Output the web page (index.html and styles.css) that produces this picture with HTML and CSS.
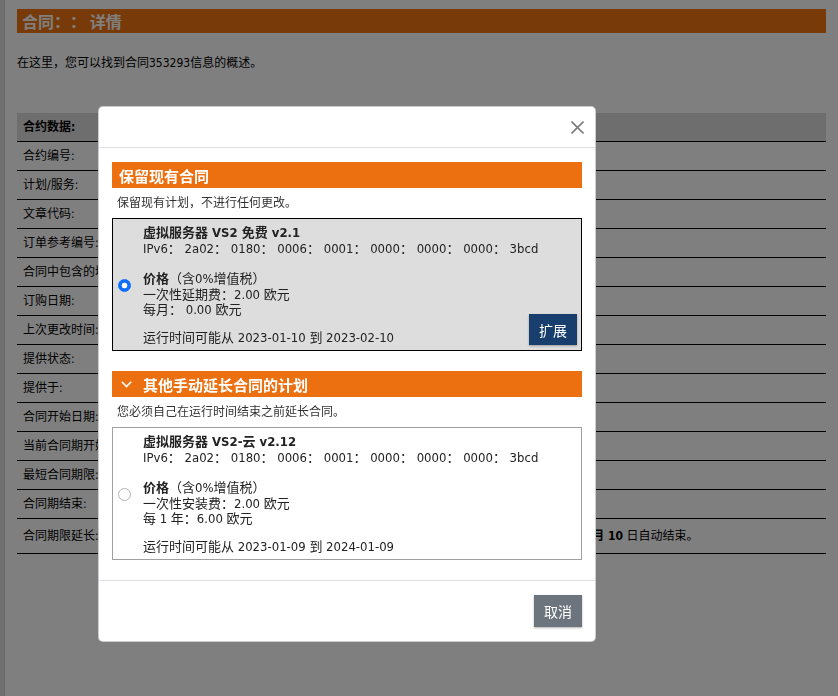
FILE: index.html
```html
<!DOCTYPE html>
<html lang="zh-CN">
<head>
<meta charset="utf-8">
<title>合同详情</title>
<link rel="stylesheet" href="styles.css">
</head>
<body>
<div class="page">
  <div class="edge"></div>
  <main class="content">
    <h1 class="page-title">合同：： 详情</h1>
    <p class="intro">在这里，您可以找到合同353293信息的概述。</p>
    <table class="data">
      <thead>
        <tr><th colspan="2">合约数据:</th></tr>
      </thead>
      <tbody>
        <tr><td class="lbl">合约编号:</td><td>353293</td></tr>
        <tr><td class="lbl">计划/服务:</td><td>虚拟服务器 VS2 免费 v2.1</td></tr>
        <tr><td class="lbl">文章代码:</td><td>VS2-FREE</td></tr>
        <tr><td class="lbl">订单参考编号:</td><td>-</td></tr>
        <tr><td class="lbl">合同中包含的域名:</td><td>-</td></tr>
        <tr><td class="lbl">订购日期:</td><td>2022-12-10</td></tr>
        <tr><td class="lbl">上次更改时间:</td><td>2022-12-10</td></tr>
        <tr><td class="lbl">提供状态:</td><td>已提供</td></tr>
        <tr><td class="lbl">提供于:</td><td>2022-12-10</td></tr>
        <tr><td class="lbl">合同开始日期:</td><td>2022-12-10</td></tr>
        <tr><td class="lbl">当前合同期开始:</td><td>2022-12-10</td></tr>
        <tr><td class="lbl">最短合同期限:</td><td>1 个月</td></tr>
        <tr><td class="lbl">合同期结束:</td><td>2023-02-10</td></tr>
        <tr class="last"><td class="lbl">合同期限延长:</td><td>合同期限不会自动延长，本合同将于 <b>2023 年 2 月 10</b> 日自动结束。</td></tr>
      </tbody>
    </table>
  </main>
</div>

<div class="backdrop"></div>

<div class="modal" role="dialog">
  <div class="modal-header">
    <button class="close" aria-label="关闭">
      <svg width="13" height="13" viewBox="0 0 13 13"><path d="M0.5 0.5 L12.5 12.5 M12.5 0.5 L0.5 12.5" stroke="#7d7d7d" stroke-width="1.6" fill="none"/></svg>
    </button>
  </div>
  <div class="modal-body">
    <section class="group">
      <h2 class="group-bar">保留现有合同</h2>
      <p class="group-desc">保留现有计划，不进行任何更改。</p>
      <div class="plan selected">
        <input class="radio" type="radio" name="plan" checked>
        <div class="plan-info">
          <div class="plan-head"><b>虚拟服务器 VS2 免费 v2.1</b><br>IPv6： 2a02： 0180： 0006： 0001： 0000： 0000： 0000： 3bcd</div>
          <div class="plan-price"><b>价格</b>（含0%增值税）<br>一次性延期费：2.00 欧元<br>每月： 0.00 欧元</div>
          <div class="plan-run">运行时间可能从 2023-01-10 到 2023-02-10</div>
        </div>
        <button class="btn-extend">扩展</button>
      </div>
    </section>
    <section class="group">
      <h2 class="group-bar">
        <svg class="chev" width="11" height="7" viewBox="0 0 11 7"><path d="M0.8 0.8 L5.5 5.6 L10.2 0.8" stroke="#fff" stroke-width="1.6" fill="none"/></svg>
        其他手动延长合同的计划
      </h2>
      <p class="group-desc">您必须自己在运行时间结束之前延长合同。</p>
      <div class="plan">
        <input class="radio" type="radio" name="plan">
        <div class="plan-info">
          <div class="plan-head"><b>虚拟服务器 VS2-云 v2.12</b><br>IPv6： 2a02： 0180： 0006： 0001： 0000： 0000： 0000： 3bcd</div>
          <div class="plan-price"><b>价格</b>（含0%增值税）<br>一次性安装费：2.00 欧元<br>每 1 年：6.00 欧元</div>
          <div class="plan-run">运行时间可能从 2023-01-09 到 2024-01-09</div>
        </div>
      </div>
    </section>
  </div>
  <div class="modal-footer">
    <button class="btn-cancel">取消</button>
  </div>
</div>
</body>
</html>
```

FILE: styles.css
```css
html, body {
  margin: 0;
  padding: 0;
}

body {
  font-family: "DejaVu Sans Condensed", "DejaVu Sans", "Noto Sans CJK SC", sans-serif;
  font-stretch: condensed;
  font-size: 12px;
  color: #000;
  background: #fff;
  text-spacing-trim: space-all;
}

.page {
  display: flex;
  min-height: 100vh;
}

.edge {
  width: 4px;
  flex: none;
  background: #dedede;
  border-right: 1px solid #cfcfcf;
}

.content {
  flex: 1;
  padding: 9px 12px 0 12px;
}

.page-title {
  margin: 0;
  height: 24px;
  line-height: 24px;
  padding-left: 5px;
  background: #f07410;
  color: #fff;
  font-family: "Noto Sans CJK SC", sans-serif;
  font-size: 16px;
  font-weight: bold;
  text-spacing-trim: space-all;
}

.intro {
  margin: 22px 0 0;
  line-height: 16px;
  height: 16px;
}

.data {
  margin-top: 42px;
  width: 100%;
  border-collapse: collapse;
}

.data th {
  background: #dcdcdc;
  text-align: left;
  font-weight: bold;
  padding: 0 6px;
  line-height: 28px;
  border-bottom: 1px solid #000;
}

.data td {
  padding: 0 6px;
  line-height: 28px;
  border-bottom: 1px solid #000;
  white-space: nowrap;
}

.data td.lbl {
  width: 301px;
}

.data tr.last td {
  line-height: 34px;
}

/* overlay + modal */
.backdrop {
  position: fixed;
  inset: 0;
  background: rgba(0, 0, 0, 0.5);
  z-index: 10;
}

.modal {
  position: absolute;
  left: 98px;
  top: 106px;
  width: 498px;
  box-sizing: border-box;
  background: #fff;
  border: 1px solid rgba(0, 0, 0, 0.2);
  border-radius: 5px;
  z-index: 20;
  color: #222;
  font-size: 13px;
}

.modal-header {
  height: 40px;
  display: flex;
  justify-content: flex-end;
  align-items: center;
  padding: 0 11px 0 13px;
  border-bottom: 1px solid #dee2e6;
}

.close {
  border: 0;
  background: none;
  padding: 0;
  width: 13px;
  height: 13px;
  display: flex;
  cursor: pointer;
}

.modal-body {
  padding: 14px 13px 0;
}

.group-bar {
  margin: 0;
  height: 26px;
  display: flex;
  align-items: center;
  gap: 11px;
  padding-left: 7px;
  background: #ec6f10;
  color: #fff;
  font-size: 15px;
  font-weight: bold;
}

.group-bar .chev {
  margin-left: 2px;
  flex: none;
}

.group-desc {
  margin: 0;
  padding: 7px 5px 6px;
  line-height: 17px;
  font-size: 12px;
  color: #333;
}

.plan {
  display: grid;
  grid-template-columns: 13px minmax(0, 1fr) auto;
  column-gap: 12px;
  align-items: center;
  padding: 6px 4px 5px 5px;
  margin-bottom: 20px;
  border: 1px solid #a0a0a0;
  background: #fff;
  line-height: 15.5px;
  height: 133px;
  box-sizing: border-box;
}

.plan.selected {
  background: #dddddd;
  border-color: #000;
}

.radio {
  appearance: none;
  -webkit-appearance: none;
  margin: 0;
  width: 13px;
  height: 13px;
  border-radius: 50%;
  border: 1px solid #b5b5b5;
  background: #fff;
  box-sizing: border-box;
}

.radio:checked {
  border-color: #0d6efd;
  background: radial-gradient(circle, #fff 0 2.6px, #0d6efd 3.2px);
}

.plan-info {
  align-self: start;
  white-space: nowrap;
}

.plan-price {
  margin-top: 15px;
}

.plan-run {
  margin-top: 12px;
}

.btn-extend {
  align-self: end;
  width: 48px;
  height: 31px;
  border: 0;
  background: #173e6d;
  color: #fff;
  font-family: inherit;
  font-size: 14px;
  padding: 0;
  box-shadow: 0 1px 2px rgba(0, 0, 0, 0.3);
}

.modal-footer {
  border-top: 1px solid #dee2e6;
  padding: 14px 13px;
  display: flex;
  justify-content: flex-end;
}

.btn-cancel {
  width: 48px;
  height: 32px;
  border: 0;
  padding: 0;
  background: #6c757d;
  color: #fff;
  font-family: inherit;
  font-size: 14px;
  box-shadow: 0 1px 2px rgba(0, 0, 0, 0.3);
}
```
